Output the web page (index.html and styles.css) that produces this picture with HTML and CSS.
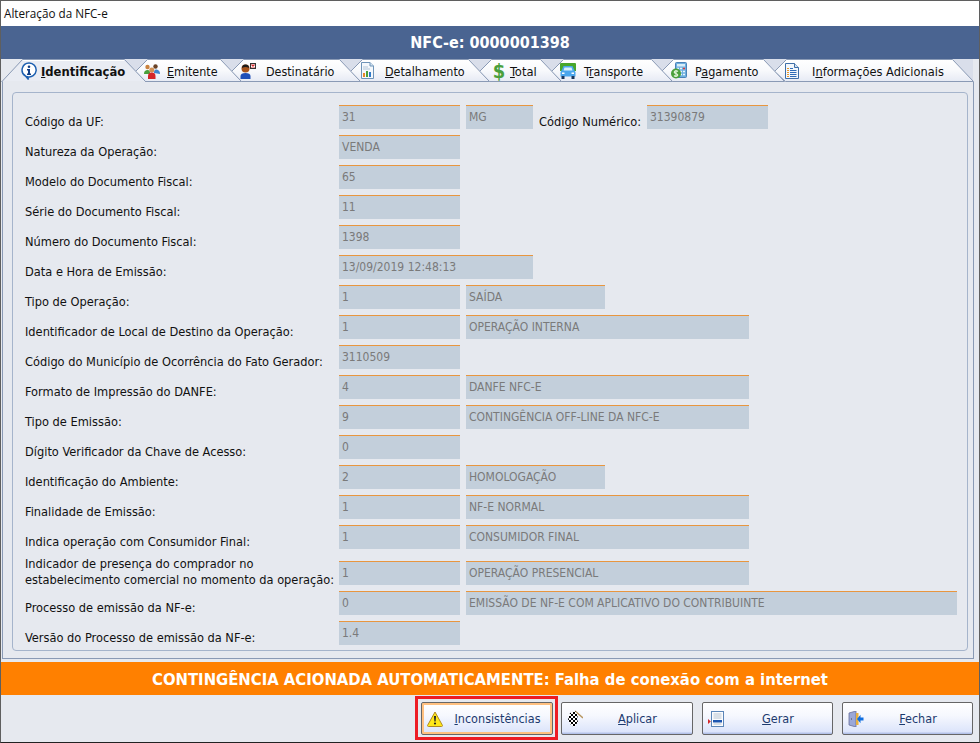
FILE: index.html
```html
<!DOCTYPE html>
<html lang="pt-BR">
<head>
    <meta charset="UTF-8">
    <title>Alteração da NFC-e</title>
    <link rel="stylesheet" href="styles.css">
</head>
<body>

    <div class="window">
        <div class="titlebar">Alteração da NFC-e</div>
        <div class="header">NFC-e: 0000001398</div>

        <!-- Abas -->
        <div class="tabs">
            <svg class="tabs-bg" width="980" height="23" viewBox="0 0 980 23">
                <defs>
                    <linearGradient id="tabFill" x1="0" y1="0" x2="0" y2="1">
                        <stop offset="0" stop-color="#ffffff"/>
                        <stop offset="0.5" stop-color="#f8f9fc"/>
                        <stop offset="1" stop-color="#e6eaf4"/>
                    </linearGradient>
                </defs>
                <rect x="0" y="0" width="980" height="23" fill="#e6e9ef"/>
                <path d="M124 0H973V22H124Z" fill="#d9deea"/>
                <g fill="url(#tabFill)" stroke="#8a9ab5">
                    <path d="M774.5 12.5L786.5 .5H952.5L973.5 22.5H785.5Z"/>
                    <path d="M661.5 12.5L673.5 .5H763.5L784.5 22.5H672.5Z"/>
                    <path d="M551.5 12.5L563.5 .5H651.5L672.5 22.5H561.5Z"/>
                    <path d="M479.5 12.5L491.5 .5H540.5L561.5 22.5H489.5Z"/>
                    <path d="M350.5 12.5L362.5 .5H468.5L489.5 22.5H360.5Z"/>
                    <path d="M231.5 12.5L243.5 .5H339.5L360.5 22.5H241.5Z"/>
                    <path d="M135.5 12.5L147.5 .5H220.5L241.5 22.5H145.5Z"/>
                </g>
                <path d="M1.5 23L22.5 .5H124.5L146 23Z" fill="#e9ecf3" stroke="#8a9ab5"/>
                <path d="M23 1.5H124" stroke="#ffffff"/>
                <path d="M3 22.5H145" stroke="#e6e9ef"/>
            </svg>

            <div class="tab tab-id active">
                <svg width="16" height="18" viewBox="0 0 16 18"><path d="M8 1a7 7 0 1 1-1.500 13.800L7.500 17.500 4.500 14A7 7 0 0 1 8 1Z" fill="#fff" stroke="#1c5fb0" stroke-width="1.500"/><circle cx="8" cy="4.800" r="1.300" fill="#123f86"/><path d="M6 7h3v4.500h1V13H6v-1.500h1V8.500H6Z" fill="#123f86"/></svg>
                <span><u>I</u>dentificação</span>
            </div>
            <div class="tab tab-em">
                <svg width="16" height="16" viewBox="0 0 16 16"><circle cx="3.500" cy="4" r="2.200" fill="#c9823f"/><circle cx="11.500" cy="3.500" r="2.200" fill="#6a4326"/><path d="M0 11c0-3 1.500-4 3.500-4S6 8 6 10v1Z" fill="#4aa03c"/><path d="M10 10c0-2 .5-3.500 2-3.500s4 1 4 4.500Z" fill="#3f86d0"/><circle cx="7.800" cy="7" r="2.500" fill="#d39155"/><path d="M4 16v-3c0-2.500 1.500-3.500 3.800-3.500s3.700 1 3.700 3.500v3Z" fill="#d4262a"/></svg>
                <span><u>E</u>mitente</span>
            </div>
            <div class="tab tab-dest">
                <svg width="16" height="16" viewBox="0 0 16 16"><circle cx="5.500" cy="5.500" r="4" fill="#a8541c"/><path d="M2 5a3.500 3.500 0 0 1 7 0C7 3.500 4 3.500 2 5Z" fill="#1c1c1c"/><path d="M.5 16v-3c0-2 2-3 5-3s5 1 5 3v3Z" fill="#1f4fb8"/><rect x="10.500" y=".5" width="5" height="5" fill="#fff" stroke="#333"/><path d="M11.500 1.500l3 3m0-3l-3 3" stroke="#d4262a" stroke-width="1.200"/></svg>
                <span>Destinatário</span>
            </div>
            <div class="tab tab-det">
                <svg width="15" height="17" viewBox="0 0 15 17"><path d="M1.500.5H10L13.500 4V16.500H1.500Z" fill="#f4f8fc" stroke="#6f94b8"/><path d="M10 .5V4h3.500" fill="#d4e4f2" stroke="#6f94b8"/><path d="M3 5h5M3 7h7" stroke="#b4c6d8"/><rect x="3" y="11" width="2" height="4" fill="#e8872a"/><rect x="6" y="9" width="2" height="6" fill="#4aa03c"/><rect x="9" y="10" width="2" height="5" fill="#2f79c8"/></svg>
                <span><u>D</u>etalhamento</span>
            </div>
            <div class="tab tab-tot">
                <span class="dollar">$</span>
                <span><u>T</u>otal</span>
            </div>
            <div class="tab tab-tra">
                <svg width="16" height="16" viewBox="0 0 16 16"><path d="M1 0H15a1 1 0 0 1 1 1V8H0V1a1 1 0 0 1 1-1Z" fill="#48a62c"/><path d="M3.500 3H12.500L14.500 7.500 15.500 9V13.500H.5V9L1.500 7.500Z" fill="#4aa6ec"/><path d="M4.500 4.500H11.500L12.500 7.500H3.500Z" fill="#d8f0fc"/><rect x="1.500" y="13" width="3" height="3" fill="#17365e"/><rect x="11.500" y="13" width="3" height="3" fill="#17365e"/><rect x="2" y="9.500" width="2.500" height="1.500" fill="#fff"/><rect x="11.500" y="9.500" width="2.500" height="1.500" fill="#fff"/></svg>
                <span>T<u>r</u>ansporte</span>
            </div>
            <div class="tab tab-pag">
                <svg width="16" height="17" viewBox="0 0 16 17"><rect x="4.500" y=".5" width="11" height="15" rx="1" fill="#6eb0e0" stroke="#4a82b8"/><rect x="6" y="2" width="8" height="2.500" fill="#d8ecf8"/><path d="M6 6.500h2m1 0h2m1 0h2M9 9.500h2m1 0h2M9 12.500h2m1 0h2" stroke="#e8f4fc" stroke-width="1.500"/><circle cx="13" cy="6.500" r="1" fill="#d4262a"/><circle cx="5" cy="11.500" r="5" fill="#4aa03c"/><path d="M7 9.500C6 8.500 3.500 8.500 3.200 10S6.800 11.500 6.800 13 4 14.500 3 13.500M5 8v7" fill="none" stroke="#e8f8e0" stroke-width="1.100"/></svg>
                <span>P<u>a</u>gamento</span>
            </div>
            <div class="tab tab-inf">
                <svg width="14" height="16" viewBox="0 0 14 16"><path d="M.5.5H9.500L13.500 4.500V15.500H.5Z" fill="#f2f7fc" stroke="#3f6fa8"/><path d="M9.500.5V4.500H13.500" fill="#cfe0f0" stroke="#3f6fa8"/><path d="M5 5.500H8M5 7.500H11.500M5 9.500H11.500M5 11.500H11.500M5 13.500H11.500" stroke="#2f6cb8"/><path d="M2 5.500H4M2 7.500H4M2 9.500H4M2 11.500H4M2 13.500H4" stroke="#e8962a"/></svg>
                <span>I<u>n</u>formações Adicionais</span>
            </div>
        </div>

        <div class="panel">
            <div class="group">
                <div class="row">
                    <label>Código da UF:</label>
                    <div class="field f-sm">31</div>
                    <div class="field f-uf">MG</div>
                    <label class="label-inline">Código Numérico:</label>
                    <div class="field f-sm">31390879</div>
                </div>
                <div class="row">
                    <label>Natureza da Operação:</label>
                    <div class="field f-sm">VENDA</div>
                </div>
                <div class="row">
                    <label>Modelo do Documento Fiscal:</label>
                    <div class="field f-sm">65</div>
                </div>
                <div class="row">
                    <label>Série do Documento Fiscal:</label>
                    <div class="field f-sm">11</div>
                </div>
                <div class="row">
                    <label>Número do Documento Fiscal:</label>
                    <div class="field f-sm">1398</div>
                </div>
                <div class="row">
                    <label>Data e Hora de Emissão:</label>
                    <div class="field f-date">13/09/2019 12:48:13</div>
                </div>
                <div class="row">
                    <label>Tipo de Operação:</label>
                    <div class="field f-sm">1</div>
                    <div class="field f-md">SAÍDA</div>
                </div>
                <div class="row">
                    <label>Identificador de Local de Destino da Operação:</label>
                    <div class="field f-sm">1</div>
                    <div class="field f-lg">OPERAÇÃO INTERNA</div>
                </div>
                <div class="row">
                    <label>Código do Município de Ocorrência do Fato Gerador:</label>
                    <div class="field f-sm">3110509</div>
                </div>
                <div class="row">
                    <label>Formato de Impressão do DANFE:</label>
                    <div class="field f-sm">4</div>
                    <div class="field f-lg">DANFE NFC-E</div>
                </div>
                <div class="row">
                    <label>Tipo de Emissão:</label>
                    <div class="field f-sm">9</div>
                    <div class="field f-lg">CONTINGÊNCIA OFF-LINE DA NFC-E</div>
                </div>
                <div class="row">
                    <label>Dígito Verificador da Chave de Acesso:</label>
                    <div class="field f-sm">0</div>
                </div>
                <div class="row">
                    <label>Identificação do Ambiente:</label>
                    <div class="field f-sm">2</div>
                    <div class="field f-md">HOMOLOGAÇÃO</div>
                </div>
                <div class="row">
                    <label>Finalidade de Emissão:</label>
                    <div class="field f-sm">1</div>
                    <div class="field f-lg">NF-E NORMAL</div>
                </div>
                <div class="row">
                    <label>Indica operação com Consumidor Final:</label>
                    <div class="field f-sm">1</div>
                    <div class="field f-lg">CONSUMIDOR FINAL</div>
                </div>
                <div class="row row-tall">
                    <label>Indicador de presença do comprador no<br>estabelecimento comercial no momento da operação:</label>
                    <div class="field f-sm">1</div>
                    <div class="field f-lg">OPERAÇÃO PRESENCIAL</div>
                </div>
                <div class="row">
                    <label>Processo de emissão da NF-e:</label>
                    <div class="field f-sm">0</div>
                    <div class="field f-xl">EMISSÃO DE NF-E COM APLICATIVO DO CONTRIBUINTE</div>
                </div>
                <div class="row">
                    <label>Versão do Processo de emissão da NF-e:</label>
                    <div class="field f-sm">1.4</div>
                </div>
            </div>
        </div>

        <div class="notice">CONTINGÊNCIA ACIONADA AUTOMATICAMENTE: Falha de conexão com a internet</div>

        <!-- Botoes -->
        <div class="footer">
            <div class="highlight">
                <button type="button" class="btn btn-focus">
                    <svg width="16" height="16" viewBox="0 0 16 16"><path d="M8 1L15.500 14.500Q15.500 15.500 14.500 15.500H1.500Q.5 15.500 .5 14.500Z" fill="#ffe81a" stroke="#b08a20" stroke-linejoin="round"/><path d="M7 5H9L8.600 10.500H7.400Z" fill="#222"/><circle cx="8" cy="12.500" r="1.100" fill="#222"/></svg>
                    <span><u>I</u>nconsistências</span>
                </button>
            </div>
            <button type="button" class="btn btn-apply">
                <svg width="16" height="18" viewBox="0 0 16 18">
                    <defs>
                        <pattern id="checker" width="4" height="4" patternUnits="userSpaceOnUse">
                            <rect width="4" height="4" fill="#fff"/>
                            <rect width="2" height="2" fill="#000"/>
                            <rect x="2" y="2" width="2" height="2" fill="#000"/>
                        </pattern>
                    </defs>
                    <path d="M8 1L16 8" stroke="#b89660" stroke-width="1.500"/>
                    <path d="M3 3L8 1 11 5 10 9 11 12 7 17 4 15 1 10 2 6Z" fill="url(#checker)"/>
                </svg>
                <span><u>A</u>plicar</span>
            </button>
            <button type="button" class="btn">
                <svg width="16" height="16" viewBox="0 0 16 16"><rect x="3.500" y=".5" width="12" height="15" fill="#fbfcfe" stroke="#5c86b8"/><path d="M5.500 3H13.500M5.500 5H13.500M5.500 7H13.500M5.500 13H13.500" stroke="#b8c4d0"/><rect x="5" y="9" width="9" height="2.500" fill="#1c55b0"/><path d="M0 8L2.800 10.500 0 13Z" fill="#d4262a"/></svg>
                <span><u>G</u>erar</span>
            </button>
            <button type="button" class="btn">
                <svg width="16" height="16" viewBox="0 0 16 16"><path d="M1 2L8 0V16L1 14Z" fill="#9ba8d8" stroke="#68709c" stroke-width=".8"/><rect x="8" y="2" width="2.500" height="12" fill="#e8b040"/><path d="M3 8h1" stroke="#444"/><path d="M15.500 6.500H12.500V3.800L9 8 12.500 12.200V9.500H15.500Z" fill="#0f6ee0"/></svg>
                <span><u>F</u>echar</span>
            </button>
        </div>
    </div>

</body>
</html>
```

FILE: styles.css
```css
html, body {
    margin: 0;
    padding: 0;
}
body {
    font-family: "DejaVu Sans Condensed", "DejaVu Sans", sans-serif;
    font-stretch: condensed;
    font-size: 12px;
    color: #111;
    background: #e6e9ef;
}
.window {
    position: relative;
    width: 980px;
    height: 743px;
    display: flex;
    flex-direction: column;
    background: #e6e9ef;
    overflow: hidden;
}
.window::after {
    content: "";
    position: absolute;
    inset: 0;
    border: 1px solid #5f5f5f;
    border-bottom-color: #222;
    pointer-events: none;
}
.titlebar {
    height: 26px;
    flex: none;
    padding-left: 4px;
    background: white;
    font-family: "Open Sans", sans-serif;
    font-size: 11.7px;
    font-stretch: normal;
    line-height: 26px;
    box-sizing: border-box;
}
.header {
    height: 33px;
    flex: none;
    background: #4a6491;
    color: white;
    font-size: 16px;
    font-weight: bold;
    line-height: 34px;
    text-align: center;
}
.tabs {
    position: relative;
    height: 23px;
    flex: none;
    display: flex;
    padding-left: 21px;
    box-sizing: border-box;
    font-size: 12.4px;
}
.tabs-bg {
    position: absolute;
    left: 0;
    top: 0;
}
.tab {
    position: relative;
    display: flex;
    align-items: center;
    height: 23px;
}
.tab svg {
    flex: none;
}
.tab span {
    padding-top: 2px;
}
.tab.active {
    font-size: 12.9px;
    font-weight: bold;
}
.tab-id { width: 123px; gap: 4px; }
.tab-em { width: 96px; gap: 7px; }
.tab-dest { width: 120px; gap: 10px; }
.tab-det { width: 131px; gap: 10px; }
.tab-tot { width: 69px; gap: 3px; font-size: 12.8px; }
.tab-tra { width: 111px; gap: 8px; }
.tab-pag { width: 114px; gap: 8px; font-size: 12.5px; }
.tab-inf { width: 160px; gap: 13px; font-size: 12.7px; }
.tab .dollar {
    width: 16px;
    padding-top: 0;
    font-size: 20px;
    font-weight: bold;
    line-height: 20px;
    text-align: center;
    color: #4aa03c;
}
.panel {
    flex: 1;
    margin: 0 6px 3px 2px;
    padding: 10px 5px 6px 9px;
    border: 1px solid #8a9ab5;
    border-top: 0;
    min-height: 0;
}
.group {
    height: 559px;
    box-sizing: border-box;
    padding: 12px 0 0 12px;
    border: 1px solid #a5b4cb;
    border-radius: 4px;
}
.row {
    display: flex;
    align-items: flex-end;
    height: 24px;
    margin-bottom: 6px;
}
.row label {
    flex: none;
    width: 314px;
    margin-bottom: -1px;
    font-size: 12.7px;
    line-height: 16px;
    white-space: nowrap;
}
.row .label-inline {
    width: 101px;
    margin: 0 7px -1px 6px;
}
.row-tall {
    margin-top: 12px;
}
.row-tall label {
    margin-bottom: -3px;
}
.field {
    flex: none;
    height: 24px;
    box-sizing: border-box;
    padding-left: 3px;
    background: #c3cfdb;
    border-top: 1px solid #e8963f;
    color: #7a7a7a;
    line-height: 22px;
}
.f-sm { width: 121px; }
.f-uf { width: 67px; margin-left: 6px; }
.f-date { width: 194px; }
.f-md { width: 139px; margin-left: 6px; }
.f-lg { width: 283px; margin-left: 6px; }
.f-xl { width: 491px; margin-left: 6px; }
.notice {
    height: 33px;
    flex: none;
    background: #ff8000;
    color: white;
    font-size: 16.5px;
    font-weight: bold;
    line-height: 36px;
    text-align: center;
}
.footer {
    height: 48px;
    flex: none;
    display: flex;
    justify-content: flex-end;
    align-items: flex-start;
    gap: 9px;
    padding: 7px 7px 0 0;
    box-sizing: border-box;
}
.btn {
    display: flex;
    align-items: center;
    width: 131px;
    height: 33px;
    padding: 0 0 0 5px;
    border: 1px solid #666;
    border-radius: 2px;
    background: linear-gradient(#ffffff, #f6f8fe 40%, #dde5fb 92%, #a9b9e4);
    font: inherit;
    font-size: 12.5px;
    font-stretch: condensed;
    color: #1c3a6e;
}
.btn span {
    flex: 1;
    text-align: center;
}
.btn svg {
    flex: none;
}
.btn-apply {
    width: 132px;
}
.btn-focus {
    width: 132px;
    box-shadow: inset 0 0 0 2px #ffc080;
}
.highlight {
    display: flex;
    margin: -6px -6px 0 0;
    padding: 3px 2px 2px 3px;
    border: 3px solid #ed1c24;
}
```
